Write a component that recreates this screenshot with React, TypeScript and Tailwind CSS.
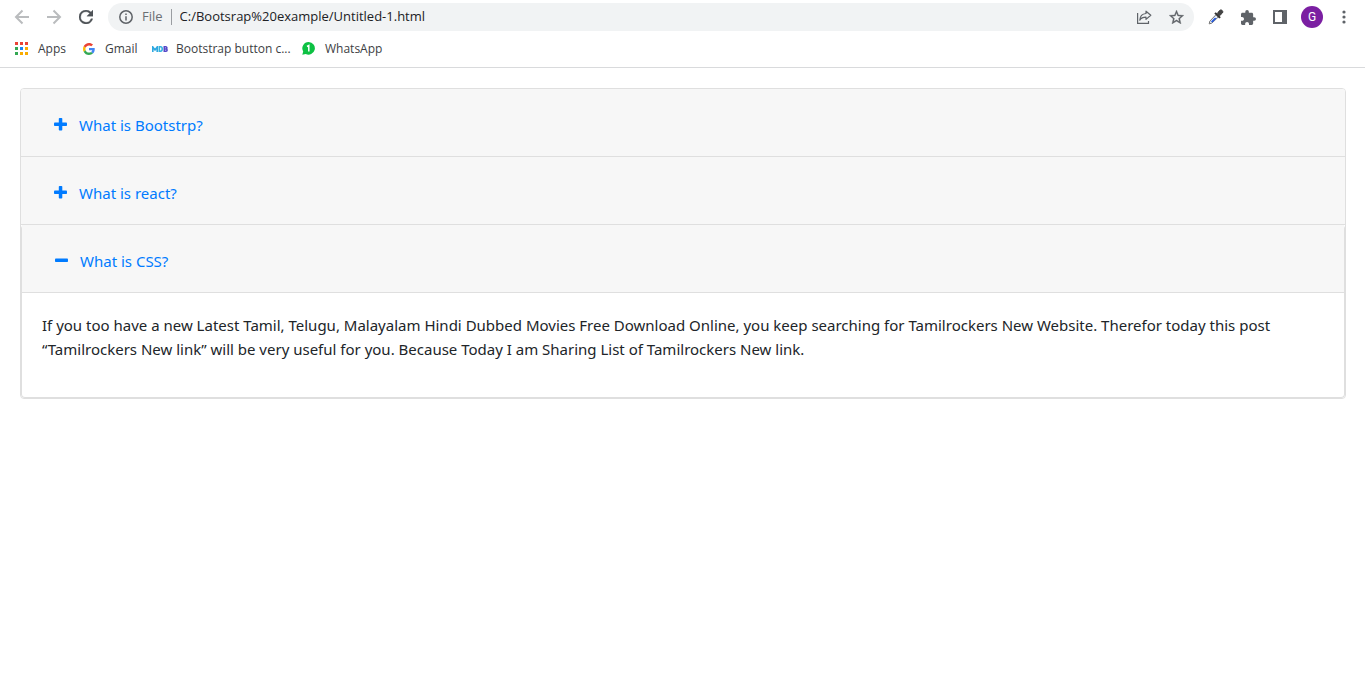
import { useState } from "react";
import type { ReactNode } from "react";

type Item = { id: string; title: string; body: string };

const items: Item[] = [
  {
    id: "bootstrap",
    title: "What is Bootstrp?",
    body: "Bootstrap is a toolkit for building responsive pages.",
  },
  {
    id: "react",
    title: "What is react?",
    body: "React is a library for building user interfaces.",
  },
  {
    id: "css",
    title: "What is CSS?",
    body: "If you too have a new Latest Tamil, Telugu, Malayalam Hindi Dubbed Movies Free Download Online, you keep searching for Tamilrockers New Website. Therefor today this post “Tamilrockers New link” will be very useful for you. Because Today I am Sharing List of Tamilrockers New link.",
  },
];

function IconButton({ label, children }: { label: string; children: ReactNode }) {
  return (
    <button type="button" aria-label={label} className="flex size-8 items-center justify-center text-[#5f6368]">
      {children}
    </button>
  );
}

function Arrow({ flip = false }: { flip?: boolean }) {
  return (
    <svg viewBox="0 0 16 16" className={flip ? "size-4 rotate-180" : "size-4"} fill="none" stroke="#babcbe" strokeWidth="2">
      <path d="M15 8H2.5M8.500 1.500 2 8l6.500 6.500" />
    </svg>
  );
}

function Toolbar() {
  return (
    <div className="flex h-[34px] items-center pl-[6px] pr-[5px]">
      <IconButton label="Back"><Arrow /></IconButton>
      <IconButton label="Forward"><Arrow flip /></IconButton>
      <IconButton label="Reload">
        <svg viewBox="4 4 16 16" className="size-[14px]" fill="#4f5358" stroke="#4f5358" strokeWidth="0.4">
          <path d="M17.650 6.350A7.958 7.958 0 0 0 12 4a8 8 0 1 0 7.730 10h-2.080A6 6 0 1 1 12 6c1.660 0 3.140.690 4.220 1.780L13 11h7V4l-2.350 2.350z" />
        </svg>
      </IconButton>
      <div className="ml-[6px] flex h-7 flex-1 items-center rounded-full bg-[#f1f3f4] pl-[11px] pr-[2px]">
        <svg viewBox="0 0 14 14" className="size-[14px]" fill="none" stroke="#5f6368" strokeWidth="1.500">
          <circle cx="7" cy="7" r="6.200" />
          <path d="M7 6.200V10.500M7 3.500V5" />
        </svg>
        <span className="ml-[9px] text-[13px] text-[#6b6f73]">File</span>
        <span className="mx-2 h-4 w-px bg-[#9a9da1]" />
        <input
          aria-label="Address"
          defaultValue="C:/Bootsrap%20example/Untitled-1.html"
          className="min-w-0 flex-1 bg-transparent text-[13px] text-[#202124] outline-none"
        />
        <IconButton label="Share">
          <svg viewBox="0 0 16 16" className="size-4" fill="none" stroke="#5f6368" strokeWidth="1.200">
            <path d="M1.600 4V14.400H12.500V12" />
            <path d="M10 2.200 14.800 6.300 10 10.400V8.200C7 8.200 5 9 3.800 11.200 4 7.500 6 4.800 10 4.500z" strokeLinejoin="round" />
          </svg>
        </IconButton>
        <IconButton label="Bookmark this page">
          <svg viewBox="2 2 20 19" className="h-[14px] w-[15px]" fill="#5f6368" stroke="#5f6368" strokeWidth="0.400">
            <path d="m22 9.240-7.190-.620L12 2 9.190 8.630 2 9.240l5.460 4.730L5.820 21 12 17.270 18.180 21l-1.630-7.030L22 9.240zM12 15.400l-3.760 2.270 1-4.280-3.320-2.880 4.380-.380L12 6.100l1.710 4.040 4.380.380-3.320 2.880 1 4.280L12 15.400z" />
          </svg>
        </IconButton>
      </div>
      <div className="ml-[6px] flex items-center">
        <IconButton label="Colour picker">
          <svg viewBox="0 0 16 16" className="size-4">
            <path d="m1.800 12.200 6.400-6.700 2.300 2.300-6.600 6.300-2.700.800z" fill="#dfe6f2" stroke="#777" strokeWidth="1" />
            <path d="m3 12.600 3.800-3.900 1.800.600-4.200 4.200z" fill="#2459e0" />
            <path d="M7.800 3.200 12.800 8.200l-1.500 1.300-5-5z" fill="#333" />
            <path d="m9.300 4.500 2.300-3c1.500-1.500 4.200.400 2.800 2.500L11.500 6.800z" fill="#444" stroke="#333" />
          </svg>
        </IconButton>
        <IconButton label="Extensions">
          <svg viewBox="2 1 21 21" className="size-[15px]" fill="#5f6368">
            <path d="M20.500 11H19V7c0-1.100-.900-2-2-2h-4V3.500a2.500 2.500 0 0 0-5 0V5H4c-1.100 0-1.990.900-1.990 2v3.800H3.500c1.490 0 2.700 1.210 2.700 2.700s-1.210 2.700-2.700 2.700H2V20c0 1.100.900 2 2 2h3.800v-1.500c0-1.490 1.210-2.700 2.700-2.700s2.700 1.210 2.700 2.700V22H17c1.100 0 2-.900 2-2v-4h1.500a2.500 2.500 0 0 0 0-5z" />
          </svg>
        </IconButton>
        <IconButton label="Side panel">
          <svg viewBox="0 0 14 14" className="size-[14px]">
            <path d="M0 0H14V14H0zM2 2V12H9V2z" fill="#5f6368" fillRule="evenodd" />
          </svg>
        </IconButton>
        <IconButton label="Profile">
          <span className="flex size-[22px] items-center justify-center rounded-full bg-[#7b1fa2] font-[Roboto,sans-serif] text-xs text-white">G</span>
        </IconButton>
        <IconButton label="Menu">
          <svg viewBox="0 0 4 14" className="h-[14px] w-1" fill="#5f6368">
            <circle cx="2" cy="2" r="1.600" />
            <circle cx="2" cy="7" r="1.600" />
            <circle cx="2" cy="12" r="1.600" />
          </svg>
        </IconButton>
      </div>
    </div>
  );
}

function AppsIcon() {
  const colors = ["#ea4335", "#ea4335", "#ea4335", "#34a853", "#1a86f5", "#f9ab00", "#34a853", "#f9ab00", "#f9ab00"];
  return (
    <svg viewBox="0 0 13 13" className="size-[13px]">
      {colors.map((color, i) => (
        <rect key={i} x={(i % 3) * 5} y={Math.floor(i / 3) * 5} width="3" height="3" fill={color} />
      ))}
    </svg>
  );
}

function GoogleIcon() {
  return (
    <svg viewBox="0 0 48 48" className="size-3">
      <path fill="#ea4335" d="M24 9.500c3.540 0 6.710 1.220 9.210 3.600l6.850-6.850C35.900 2.380 30.470 0 24 0 14.620 0 6.510 5.380 2.560 13.220l7.980 6.190C12.430 13.720 17.740 9.500 24 9.500z" />
      <path fill="#4285f4" d="M46.980 24.550c0-1.570-.150-3.090-.380-4.550H24v9.020h12.940c-.580 2.960-2.260 5.480-4.780 7.180l7.730 6c4.510-4.180 7.090-10.360 7.090-17.650z" />
      <path fill="#fbbc05" d="M10.530 28.590A14.500 14.500 0 0 1 9.770 24c0-1.600.270-3.140.760-4.590l-7.980-6.190A23.900 23.900 0 0 0 0 24c0 3.880.920 7.540 2.560 10.780l7.970-6.190z" />
      <path fill="#34a853" d="M24 48c6.480 0 11.930-2.130 15.890-5.810l-7.730-6c-2.150 1.450-4.920 2.300-8.160 2.300-6.260 0-11.570-4.220-13.470-9.910l-7.980 6.190C6.510 42.620 14.620 48 24 48z" />
    </svg>
  );
}

function MdbIcon() {
  return (
    <svg viewBox="0 0 16 6" className="h-[6px] w-4" fill="none" strokeWidth="1.600">
      <path d="M.8 6V1L3 4 5.200 1V6" stroke="#2fa8e0" />
      <path d="M7.300.800V5.200H8.500C10.800 5.200 10.800.800 8.500.800z" stroke="#35b3df" />
      <path d="M12.300.800V5.200H14C15.500 5.200 15.500 3 14 3H12.500 13.800C15.200 3 15.200.800 13.800.800z" stroke="#5548c8" />
    </svg>
  );
}

function WhatsAppIcon() {
  return (
    <svg viewBox="0 0 13 13" className="size-[13px]">
      <path d="M6.700 0a6.300 6.300 0 1 1-3 11.900L.3 12.700 1.200 9.500A6.300 6.300 0 0 1 6.700 0z" fill="#0dc143" />
      <path d="M5 4.500 6.800 3.500V9.500" stroke="#fff" strokeWidth="1.500" fill="none" />
    </svg>
  );
}

function Bookmark({ icon, label, className }: { icon: ReactNode; label: string; className: string }) {
  return (
    <a href="#" className={`flex items-center whitespace-nowrap ${className}`}>
      {icon}
      <span>{label}</span>
    </a>
  );
}

function Bookmarks() {
  return (
    <nav aria-label="Bookmarks" className="flex h-[34px] items-center border-b border-[#d9dadc] pb-1 pl-[15px] text-xs text-[#3c4043]">
      <Bookmark icon={<AppsIcon />} label="Apps" className="w-[68px] gap-[10px]" />
      <Bookmark icon={<GoogleIcon />} label="Gmail" className="w-[69px] gap-[10px]" />
      <Bookmark icon={<MdbIcon />} label="Bootstrap button c..." className="w-[150px] gap-2" />
      <Bookmark icon={<WhatsAppIcon />} label="WhatsApp" className="gap-[10px]" />
    </nav>
  );
}

function ToggleIcon({ open }: { open: boolean }) {
  return (
    <svg viewBox="0 0 13 13" className="mb-px size-[13px]" fill="#007bff">
      <rect x="0" y="4.500" width="13" height="3.500" rx="0.800" />
      {!open && <rect x="4.800" y="0" width="3.500" height="12.500" rx="0.800" />}
    </svg>
  );
}

function Panel({ item, open, onToggle }: { item: Item; open: boolean; onToggle: () => void }) {
  return (
    <section className={open ? "rounded border-x border-b border-[#dfdfdf]" : ""}>
      <h2 className="flex h-[68px] items-center border-b border-[#dfdfdf] bg-[#f7f7f7] px-5 pt-[5px]">
        <button
          type="button"
          id={`${item.id}-button`}
          aria-expanded={open}
          aria-controls={`${item.id}-panel`}
          onClick={onToggle}
          className="flex items-center gap-3 border border-transparent px-3 leading-6 text-[#007bff]"
        >
          <ToggleIcon open={open} />
          {item.title}
        </button>
      </h2>
      {open && (
        <div id={`${item.id}-panel`} role="region" aria-labelledby={`${item.id}-button`} className="p-5">
          <p className="mb-4 leading-6 text-[#212529]">{item.body}</p>
        </div>
      )}
    </section>
  );
}

export default function App() {
  const [openId, setOpenId] = useState<string | null>("css");
  return (
    <div className="min-h-screen bg-white font-['Noto_Sans',sans-serif]">
      <header className="font-['Open_Sans',sans-serif]">
        <Toolbar />
        <Bookmarks />
      </header>
      <main className="py-5 pl-5 pr-[19px] text-[15px]">
        <div className="overflow-hidden rounded border border-[#dfdfdf]">
          {items.map((item) => (
            <Panel
              key={item.id}
              item={item}
              open={openId === item.id}
              onToggle={() => setOpenId(openId === item.id ? null : item.id)}
            />
          ))}
        </div>
      </main>
    </div>
  );
}
